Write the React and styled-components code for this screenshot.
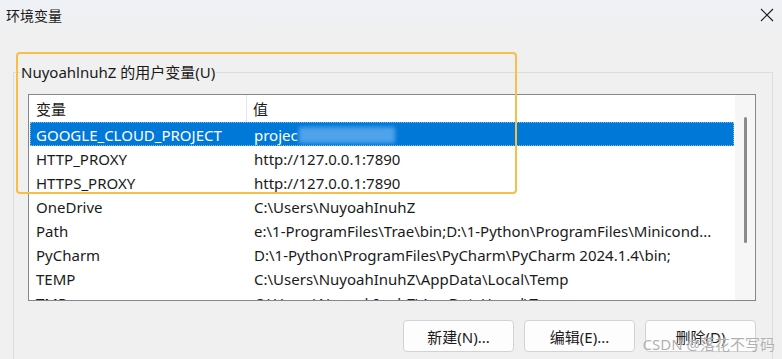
import styled, { createGlobalStyle } from "styled-components";

const GlobalStyle = createGlobalStyle`
	html, body {
		margin: 0;
		padding: 0;
		background: #f0f0f0;
	}
	body {
		font-family: "Segoe UI", "Noto Sans", "Noto Sans CJK SC", sans-serif;
		overflow: hidden;
	}
`;

const rows = [
	{ name: "GOOGLE_CLOUD_PROJECT", value: "projec", hidden: true, selected: true },
	{ name: "HTTP_PROXY", value: "http://127.0.0.1:7890" },
	{ name: "HTTPS_PROXY", value: "http://127.0.0.1:7890" },
	{ name: "OneDrive", value: "C:\\Users\\NuyoahInuhZ" },
	{ name: "Path", value: "e:\\1-ProgramFiles\\Trae\\bin;D:\\1-Python\\ProgramFiles\\Minicond..." },
	{ name: "PyCharm", value: "D:\\1-Python\\ProgramFiles\\PyCharm\\PyCharm 2024.1.4\\bin;" },
	{ name: "TEMP", value: "C:\\Users\\NuyoahInuhZ\\AppData\\Local\\Temp" },
	{ name: "TMP", value: "C:\\Users\\NuyoahInuhZ\\AppData\\Local\\Temp" },
];

export default function App() {
	return (
		<Window>
			<GlobalStyle />
			<TitleBar>
				<Title>环境变量</Title>
				<CloseButton>
					<svg width="14" height="14" viewBox="0 0 14 14">
						<path d="M1 1 L13 13 M13 1 L1 13" stroke="#1a1a1a" strokeWidth="1.1" />
					</svg>
				</CloseButton>
			</TitleBar>
			<Body>
				<GroupBox>
					<Legend>NuyoahlnuhZ 的用户变量(U)</Legend>
					<ListView>
						<Table>
							<HeaderRow>
								<HeaderCell $first>变量</HeaderCell>
								<HeaderCell>值</HeaderCell>
							</HeaderRow>
							{rows.map((row) => (
								<Row key={row.name} $selected={row.selected}>
									<NameCell>{row.name}</NameCell>
									<ValueCell>
										{row.value}
										{row.hidden ? <Blurred /> : null}
									</ValueCell>
								</Row>
							))}
						</Table>
						<ScrollTrack>
							<ScrollThumb />
						</ScrollTrack>
					</ListView>
					<ButtonRow>
						<Button>新建(N)...</Button>
						<Button>编辑(E)...</Button>
						<Button>删除(D)</Button>
					</ButtonRow>
				</GroupBox>
			</Body>
			<Highlight />
			<Watermark>CSDN @落花不写码</Watermark>
		</Window>
	);
}

const Window = styled.div`
	position: relative;
	width: 782px;
	height: 359px;
	overflow: hidden;
	background: #f0f0f0;
	display: flex;
	flex-direction: column;
`;

const TitleBar = styled.div`
	height: 30px;
	flex-shrink: 0;
	display: flex;
	align-items: center;
	justify-content: space-between;
	padding: 0 8px 4px 6px;
	background: linear-gradient(#eef1f6, #f0f0f0);
`;

const Title = styled.div`
	font-size: 14px;
	color: #1a1a1a;
`;

const CloseButton = styled.div`
	width: 14px;
	height: 14px;
	display: flex;
`;

const Body = styled.div`
	padding: 27px 9px 0 13px;
`;

const GroupBox = styled.fieldset`
	margin: 0;
	padding: 0 16px 0 14px;
	border: 1px solid #dcdcdc;
	border-bottom: none;
	min-width: 0;
	height: 320px;
`;

const Legend = styled.legend`
	font-size: 15px;
	color: #1a1a1a;
	padding: 0 1px;
	margin-left: -8px;
	line-height: 22px;
`;

const ListView = styled.div`
	margin-top: 11px;
	height: 207px;
	border: 1px solid #828790;
	background: #fff;
	display: flex;
	box-sizing: border-box;
`;

const Table = styled.div`
	flex: 1;
	overflow: hidden;
	padding-left: 1px;
	padding-right: 1px;
`;

const HeaderRow = styled.div`
	display: grid;
	grid-template-columns: 217px 1fr;
	height: 27px;
	align-items: center;
`;

const HeaderCell = styled.div`
	font-size: 15px;
	color: #1a1a1a;
	height: 100%;
	display: flex;
	align-items: center;
	padding-left: 6px;
	border-right: ${(p) => (p.$first ? "1px solid #e5e5e5" : "none")};
`;

const Row = styled.div`
	display: grid;
	grid-template-columns: 217px 1fr;
	height: 24px;
	align-items: center;
	font-size: 15px;
	white-space: nowrap;
	color: ${(p) => (p.$selected ? "#fff" : "#1a1a1a")};
	background: ${(p) => (p.$selected ? "#0078d7" : "transparent")};
	outline: ${(p) => (p.$selected ? "1px dotted #7fbbee" : "none")};
	outline-offset: -1px;
`;

const NameCell = styled.div`
	padding-left: 6px;
	padding-top: 1px;
	overflow: hidden;
`;

const ValueCell = styled.div`
	padding-left: 7px;
	padding-top: 1px;
	overflow: hidden;
	display: flex;
	align-items: center;
`;

const Blurred = styled.span`
	display: inline-block;
	width: 96px;
	height: 16px;
	margin-left: 1px;
	background: #4fa3ea;
	filter: blur(2px);
`;

const ScrollTrack = styled.div`
	width: 20px;
	flex-shrink: 0;
	background: #f6f6f6;
	display: flex;
	justify-content: center;
	padding-top: 22px;
`;

const ScrollThumb = styled.div`
	width: 3px;
	height: 126px;
	border-radius: 2px;
	background: #8a8a8a;
	margin-left: 1px;
`;

const ButtonRow = styled.div`
	display: flex;
	justify-content: flex-end;
	gap: 10px;
	margin-top: 19px;
`;

const Button = styled.button`
	width: 111px;
	height: 32px;
	border: 1px solid #d2d2d2;
	border-radius: 4px;
	background: #fdfdfd;
	font-family: inherit;
	font-size: 15px;
	color: #1a1a1a;
	padding: 0;
`;

const Highlight = styled.div`
	position: absolute;
	left: 16px;
	top: 52px;
	width: 501px;
	height: 142px;
	box-sizing: border-box;
	border: 2px solid #f7be48;
	border-radius: 4px;
	pointer-events: none;
`;

const Watermark = styled.div`
	position: absolute;
	right: 7px;
	bottom: 5px;
	font-size: 15px;
	color: rgba(150, 150, 150, 0.75);
	text-shadow: 0 0 1px #fff;
	pointer-events: none;
`;
